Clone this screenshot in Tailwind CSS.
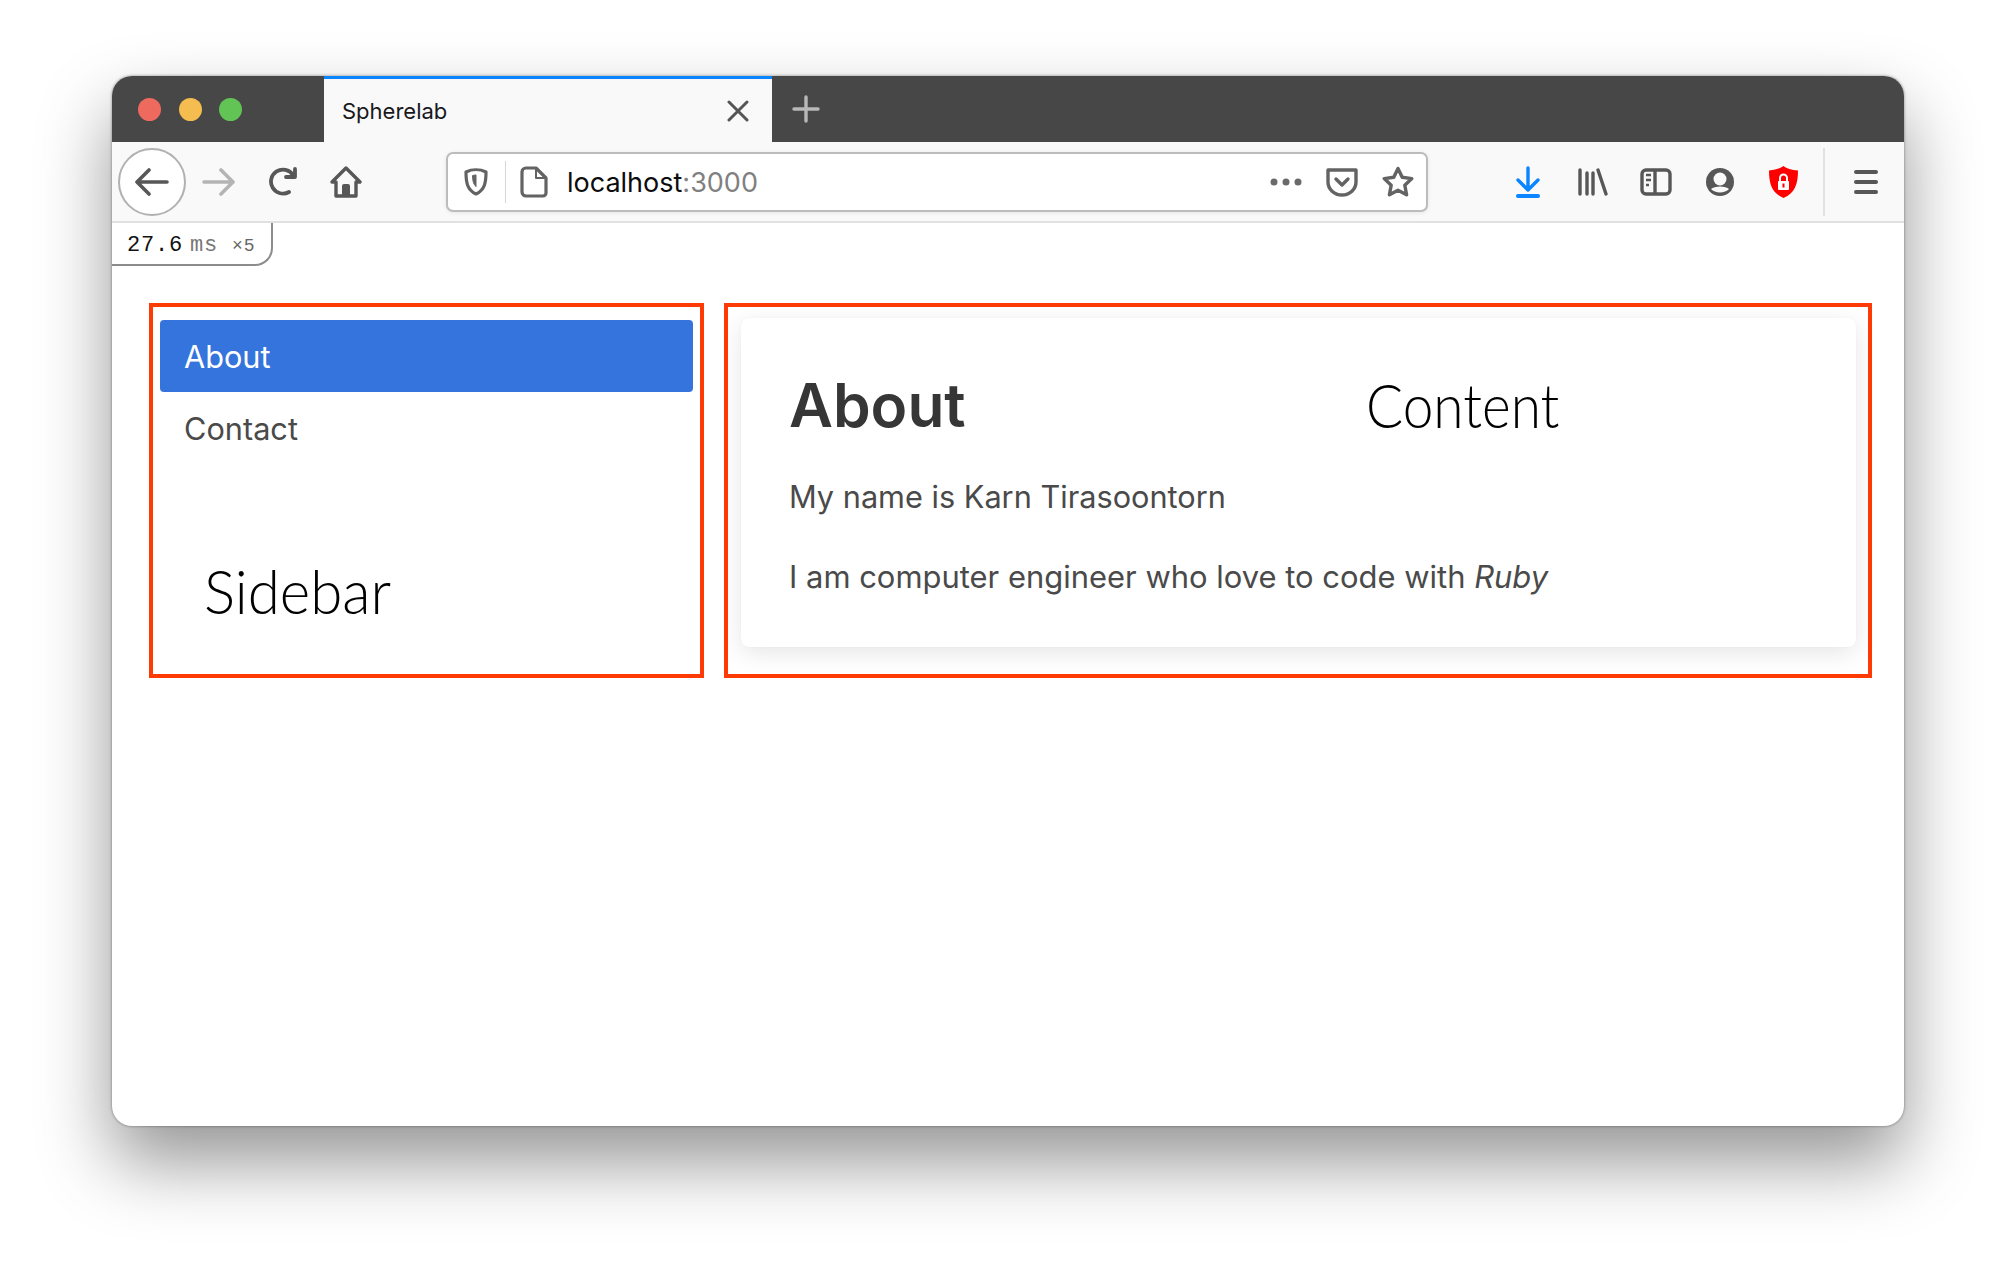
<!DOCTYPE html>
<html lang="en">
  <head>
    <meta charset="UTF-8" />
    <title>Spherelab</title>
    <script src="https://cdn.jsdelivr.net/npm/@tailwindcss/browser@4"></script>
  </head>
  <body class="bg-white font-['Inter',sans-serif] overflow-hidden h-[1274px]">
    <!-- browser window -->
    <div class="ml-[112px] mt-[76px] w-[1792px] h-[1050px] bg-white rounded-[20px] relative shadow-[0_36px_72px_rgba(0,0,0,0.42),0_0_3px_rgba(0,0,0,0.45)]">
      <!-- title bar -->
      <div class="h-[66px] bg-[#474747] rounded-t-[20px] flex items-stretch">
        <div class="flex items-center gap-[17.5px] pl-[26px] w-[212px] shrink-0">
          <span class="w-[23px] h-[23px] rounded-full bg-[#ee6a5f]"></span>
          <span class="w-[23px] h-[23px] rounded-full bg-[#f5bd4f]"></span>
          <span class="w-[23px] h-[23px] rounded-full bg-[#61c454]"></span>
        </div>
        <div class="w-[448px] bg-[#f9f9fa] border-t-[3px] border-[#0a84ff] flex items-center pl-[18px] pr-[23px] text-[22px] text-[#18181a]">
          <span class="pt-[2px]">Spherelab</span>
          <svg class="ml-auto" width="22" height="22" viewBox="0 0 22 22" fill="none" stroke="#555" stroke-width="3" stroke-linecap="round"><path d="M2 2 20 20M20 2 2 20"/></svg>
        </div>
        <div class="flex items-center ml-[20px]">
          <svg width="28" height="28" viewBox="0 0 28 28" fill="none" stroke="#b8b8b8" stroke-width="3.4" stroke-linecap="round"><path d="M14 2v24M2 14h24"/></svg>
        </div>
      </div>

      <!-- toolbar -->
      <div class="h-[81px] bg-[#f9f9fa] border-b-2 border-[#e1e1e2] flex items-center pl-[6px]">
        <div class="w-[68px] h-[68px] rounded-full bg-white border-2 border-[#b1b1b1] flex items-center justify-center shrink-0">
          <svg width="34" height="28" viewBox="0 0 34 28" fill="none" stroke="#575757" stroke-width="3.6" stroke-linecap="round" stroke-linejoin="round"><path d="M32 14H3M14 2 2 14l12 12"/></svg>
        </div>
        <svg class="ml-[16px] shrink-0" width="33" height="28" viewBox="0 0 33 28" fill="none" stroke="#b4b4b4" stroke-width="3.6" stroke-linecap="round" stroke-linejoin="round"><path d="M2 14h28M19 2l12 12-12 12"/></svg>
        <svg class="ml-[32px] shrink-0" width="32" height="30" viewBox="0 0 32 30" fill="none" stroke="#575757" stroke-width="3.8" stroke-linecap="round" stroke-linejoin="round"><path d="M22 25a12 12 0 1 1 4-17"/><path d="M28 2v8h-9" /></svg>
        <svg class="ml-[31px] shrink-0" width="32" height="32" viewBox="0 0 32 32" fill="none" stroke="#575757" stroke-width="3.4" stroke-linecap="round" stroke-linejoin="round"><path d="M2 16 16 2l14 14h-4v14H6V16z"/><path d="M13 30V20a1 1 0 0 1 1-1h4a1 1 0 0 1 1 1v10z" fill="#575757" stroke-width="2"/></svg>

        <!-- url bar -->
        <div class="ml-[84px] w-[982px] h-[60px] shrink-0 bg-white border-2 border-[#bcbcbc] rounded-[7px] flex items-center shadow-[0_1px_4px_rgba(0,0,0,0.08)]">
          <svg class="ml-[16px] shrink-0" width="24" height="28" viewBox="0 0 24 28" fill="none" stroke="#636363" stroke-width="3.2" stroke-linejoin="round"><path d="M2 4c6-3 14-3 20 0 0 10-1 18-10 22C3 22 2 14 2 4z"/><path d="M12 7c-1.500 0-2.600.2-3.500.6.100 4.400.6 8 3.500 11z" fill="#636363" stroke-width="1"/></svg>
          <span class="ml-[17px] w-px h-[42px] bg-[#d6d6d6] shrink-0"></span>
          <svg class="ml-[14px] shrink-0" width="28" height="32" viewBox="0 0 28 32" fill="none" stroke="#636363" stroke-width="3.2" stroke-linejoin="round"><path d="M6 2h10l10 10v15a3 3 0 0 1-3 3H6a4 4 0 0 1-4-4V6a4 4 0 0 1 4-4z"/><path d="M16 2v10h10" stroke-width="2"/></svg>
          <span class="ml-[19px] pt-[4px] text-[27px] text-[#0c0c0d]">localhost<span class="text-[#808080]">:3000</span></span>
          <svg class="ml-auto shrink-0" width="32" height="8" viewBox="0 0 32 8" fill="#6a6a6a"><circle cx="4" cy="4" r="3.500"/><circle cx="16" cy="4" r="3.500"/><circle cx="28" cy="4" r="3.500"/></svg>
          <svg class="ml-[24px] shrink-0" width="32" height="30" viewBox="0 0 32 30" fill="none" stroke="#636363" stroke-width="3.4" stroke-linecap="round" stroke-linejoin="round"><path d="M2 3h28v12a14 13 0 0 1-28 0z"/><path d="M10 12l6 6 6-6"/></svg>
          <svg class="ml-[24px] mr-[12px] shrink-0" width="32" height="32" viewBox="0 0 32 32" fill="none" stroke="#636363" stroke-width="3.4" stroke-linejoin="round"><path d="M16 2.500l4.200 8.800 9.600 1.300-7 6.600 1.800 9.600L16 24.200l-8.600 4.600 1.800-9.600-7-6.600 9.600-1.300z"/></svg>
        </div>

        <!-- toolbar buttons -->
        <svg class="ml-[88px] shrink-0" width="24" height="32" viewBox="0 0 24 32" fill="none" stroke="#0a84ff" stroke-width="3.4" stroke-linecap="round" stroke-linejoin="round"><path d="M12 2v21M2 14l10 10 10-10"/><path d="M2 30h20" stroke-width="4"/></svg>
        <svg class="ml-[38px] shrink-0" width="30" height="28" viewBox="0 0 30 28" fill="none" stroke="#575757" stroke-width="3.400" stroke-linecap="round"><path d="M2 2v24M9 5v21M15 5v21M20 2l8 24"/></svg>
        <svg class="ml-[32px] shrink-0" width="32" height="28" viewBox="0 0 32 28" fill="none" stroke="#575757" stroke-width="3.400" stroke-linejoin="round"><rect x="2" y="2" width="28" height="24" rx="4"/><path d="M15 2v24"/><path d="M6 7h5M6 12h5M6 17h3" stroke-width="2.400"/></svg>
        <svg class="ml-[34px] shrink-0" width="28" height="28" viewBox="0 0 28 28"><circle cx="14" cy="14" r="14" fill="#575757"/><circle cx="14" cy="11" r="6.500" fill="#f9f9fa"/><path d="M5 21c3-3.500 15-3.500 18 0-4 4.500-14 4.500-18 0z" fill="#f9f9fa"/></svg>
        <svg class="ml-[35px] shrink-0" width="29" height="32" viewBox="0 0 29 32"><path d="M14.500 0c3 2.400 8 4 14.500 4.500C29 18 26 27 14.500 32 3 27 0 18 0 4.500 6.500 4 11.500 2.400 14.500 0z" fill="#f00"/><path d="M11 15v-3a3.500 3.500 0 0 1 7 0v3" fill="none" stroke="#fff" stroke-width="2"/><rect x="9" y="15" width="11" height="9" rx="1" fill="#fff"/><rect x="13.500" y="17.500" width="2" height="4" fill="#f00"/></svg>
        <span class="ml-[25px] w-[2px] h-[68px] bg-[#e1e1e2] shrink-0"></span>
        <svg class="ml-[29px] shrink-0" width="24" height="24" viewBox="0 0 24 24" fill="none" stroke="#575757" stroke-width="4" stroke-linecap="round"><path d="M2 2h20M2 12h20M2 22h20"/></svg>
      </div>

      <!-- dev timing badge -->
      <div class="absolute left-0 top-[147px] w-[161px] h-[43px] bg-white border-r-2 border-b-2 border-[#8c8c8c] rounded-br-[18px] flex items-center pl-[15px] pt-[4px] font-['Liberation_Mono',monospace] text-[22px] leading-none whitespace-nowrap">
        <span class="text-[#111] tracking-[0.8px]">27.6</span>
        <span class="ml-[7px] text-[#777] tracking-[0.8px]">ms</span>
        <span class="ml-[14px] text-[18px] text-[#666] tracking-[1px]">×5</span>
      </div>

      <!-- page -->
      <div class="flex gap-[20px] pl-[37px] pt-[80px] text-[#4a4a4a]">
        <aside class="relative w-[555px] h-[375px] border-4 border-[#ff3b05] pt-[13px] pl-[7px] pr-[7px] text-[30.7px]">
          <a class="h-[72px] flex items-center pl-[24px] pt-[2px] bg-[#3574dc] text-white rounded-[4px]">About</a>
          <a class="h-[72px] flex items-center pl-[24px] pt-[2px]">Contact</a>
          <span class="absolute left-[51px] top-[252px] origin-left scale-x-[0.94] font-['Lato',sans-serif] font-light text-[62px] leading-none text-black">Sidebar</span>
        </aside>
        <main class="relative w-[1148px] h-[375px] border-4 border-[#ff3b05] pt-[11px] pl-[13px] pr-[12px]">
          <div class="h-[329px] rounded-[8px] bg-white px-[48px] pt-[51px] shadow-[0_6px_24px_rgba(0,0,0,0.1),0_0_2px_rgba(0,0,0,0.04)]">
            <h1 class="text-[60.4px] leading-[72px] font-semibold text-[#363636]">About</h1>
            <p class="mt-[36px] text-[30.7px] leading-[40px]">My name is Karn Tirasoontorn</p>
            <p class="mt-[40px] text-[30.95px] leading-[40px]">I am computer engineer who love to code with <em>Ruby</em></p>
          </div>
          <span class="absolute left-[638px] top-[66px] origin-left scale-x-[0.887] font-['Lato',sans-serif] font-light text-[62px] leading-none text-black">Content</span>
        </main>
      </div>
    </div>
  </body>
</html>
